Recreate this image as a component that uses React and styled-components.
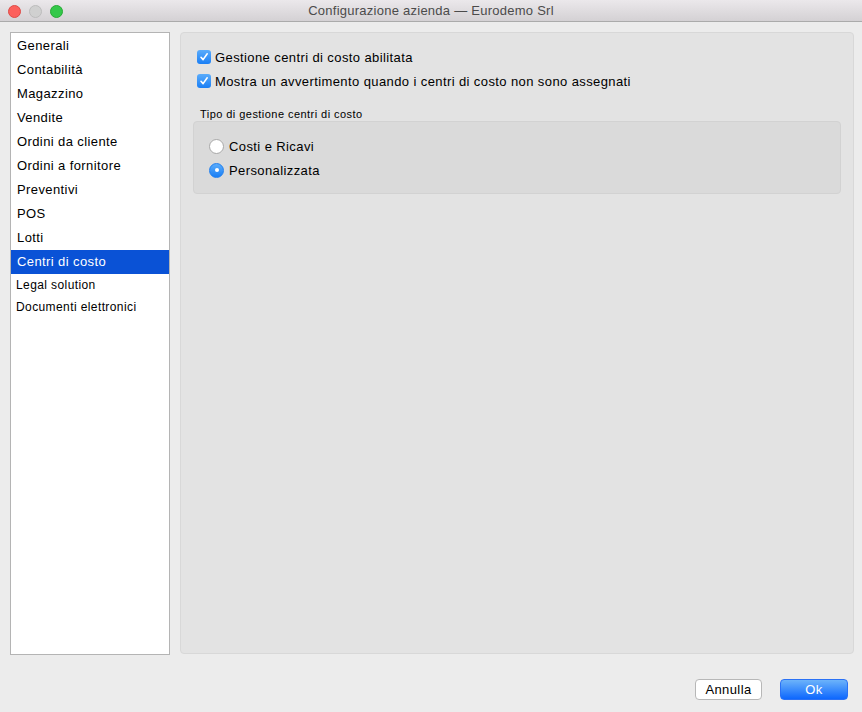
import styled, { createGlobalStyle } from "styled-components"

const GlobalStyle = createGlobalStyle`
  html, body {
    margin: 0;
    padding: 0;
    background: #ececec;
  }
  body {
    font-family: "Liberation Sans", Arial, sans-serif;
    font-size: 13px;
    letter-spacing: 0.4px;
    color: #000;
  }
`

const sections = [
  "Generali",
  "Contabilità",
  "Magazzino",
  "Vendite",
  "Ordini da cliente",
  "Ordini a fornitore",
  "Preventivi",
  "POS",
  "Lotti",
  "Centri di costo",
]

const smallSections = ["Legal solution", "Documenti elettronici"]

const Check = () => (
  <svg width="10" height="10" viewBox="0 0 10 10">
    <path d="M2 5.3 L4.1 7.6 L8.2 1.8" fill="none" stroke="#fff" strokeWidth="1.6" strokeLinecap="round" strokeLinejoin="round" />
  </svg>
)

const App = () => {
  return (
    <>
      <GlobalStyle />
      <Window>
        <TitleBar>
          <Lights>
            <Light $bg="#fc605c" $border="#de4a46" />
            <Light $bg="#d0d0d0" $border="#bcbcbc" />
            <Light $bg="#34c84a" $border="#27aa35" />
          </Lights>
          <Title>Configurazione azienda — Eurodemo Srl</Title>
        </TitleBar>

        <Body>
          <Sidebar>
            {sections.map(s => (
              <Item key={s} $selected={s === "Centri di costo"}>{s}</Item>
            ))}
            {smallSections.map(s => (
              <SmallItem key={s}>{s}</SmallItem>
            ))}
          </Sidebar>

          <Panel>
            <CheckRow>
              <CheckBox><Check /></CheckBox>
              Gestione centri di costo abilitata
            </CheckRow>
            <CheckRow>
              <CheckBox><Check /></CheckBox>
              Mostra un avvertimento quando i centri di costo non sono assegnati
            </CheckRow>

            <GroupLabel>Tipo di gestione centri di costo</GroupLabel>
            <GroupBox>
              <RadioRow>
                <Radio />
                Costi e Ricavi
              </RadioRow>
              <RadioRow>
                <Radio $on />
                Personalizzata
              </RadioRow>
            </GroupBox>
          </Panel>
        </Body>

        <Footer>
          <CancelButton>Annulla</CancelButton>
          <OkButton>Ok</OkButton>
        </Footer>
      </Window>
    </>
  )
}

const Window = styled.div`
  width: 862px;
  height: 712px;
  display: flex;
  flex-direction: column;
  background: #ececec;
  overflow: hidden;
`

const TitleBar = styled.div`
  height: 21px;
  flex-shrink: 0;
  position: relative;
  display: flex;
  align-items: center;
  justify-content: center;
  background: linear-gradient(#ebe8eb, #d4d1d4);
  border-bottom: 1px solid #ababab;
`

const Lights = styled.div`
  position: absolute;
  left: 8px;
  top: 5px;
  display: flex;
  gap: 8px;
`

const Light = styled.span`
  width: 11px;
  height: 11px;
  border-radius: 50%;
  background: ${p => p.$bg};
  border: 0.5px solid ${p => p.$border};
`

const Title = styled.div`
  font-size: 13px;
  color: #4b4b4b;
  letter-spacing: 0.25px;
`

const Body = styled.div`
  flex-shrink: 0;
  display: flex;
  gap: 10px;
  padding: 10px 8px 0 10px;
`

const Sidebar = styled.div`
  width: 158px;
  height: 620px;
  flex-shrink: 0;
  background: #fff;
  border: 1px solid #b4b4b4;
  padding-top: 1px;
  box-sizing: content-box;
`

const Item = styled.div`
  height: 24px;
  line-height: 24px;
  padding-left: 6px;
  font-size: 13px;
  background: ${p => (p.$selected ? "#0a52d6" : "transparent")};
  color: ${p => (p.$selected ? "#fff" : "#000")};
`

const SmallItem = styled.div`
  height: 22px;
  line-height: 22px;
  padding-left: 5px;
  font-size: 12px;
`

const Panel = styled.div`
  flex: 1;
  height: 622px;
  box-sizing: border-box;
  background: #e3e3e3;
  border: 1px solid #d8d8d8;
  border-radius: 4px;
  padding: 12px 12px 0 12px;
`

const CheckRow = styled.div`
  display: flex;
  align-items: center;
  gap: 4px;
  height: 24px;
  padding-left: 4px;
`

const CheckBox = styled.span`
  width: 14px;
  height: 14px;
  border-radius: 3px;
  background: linear-gradient(#5bacfb, #1a7ff5);
  display: flex;
  align-items: center;
  justify-content: center;
`

const GroupLabel = styled.div`
  font-size: 11px;
  letter-spacing: 0.45px;
  margin: 14px 0 0 7px;
  height: 14px;
  line-height: 14px;
`

const GroupBox = styled.div`
  height: 73px;
  box-sizing: border-box;
  background: #dadada;
  border: 1px solid #d2d2d2;
  border-radius: 4px;
  padding-top: 12px;
`

const RadioRow = styled.div`
  display: flex;
  align-items: center;
  gap: 5px;
  height: 24px;
  padding-left: 15px;
`

const Radio = styled.span`
  width: 15px;
  height: 15px;
  border-radius: 50%;
  box-sizing: border-box;
  position: relative;
  background: ${p => (p.$on ? "linear-gradient(#5bacfb, #1a7ff5)" : "#fff")};
  border: 1px solid ${p => (p.$on ? "#1f7ff0" : "#a8a8a8")};

  &::after {
    content: "";
    display: ${p => (p.$on ? "block" : "none")};
    position: absolute;
    left: 4.5px;
    top: 4.5px;
    width: 4px;
    height: 4px;
    border-radius: 50%;
    background: #fff;
  }
`

const Footer = styled.div`
  flex: 1;
  display: flex;
  justify-content: flex-end;
  align-items: flex-start;
  gap: 18px;
  padding: 24px 14px 0 0;
  box-sizing: border-box;
`

const Button = styled.button`
  height: 21px;
  border-radius: 4px;
  font-family: "Liberation Sans", Arial, sans-serif;
  font-size: 13px;
  letter-spacing: 0.4px;
  padding: 0;
  cursor: default;
`

const CancelButton = styled(Button)`
  width: 67px;
  background: #fff;
  border: 1px solid #b7b7b7;
  color: #000;
`

const OkButton = styled(Button)`
  width: 68px;
  background: linear-gradient(#6cb3fa, #0d67fe);
  border: 1px solid #2a71f5;
  color: #fff;
`

export default App
